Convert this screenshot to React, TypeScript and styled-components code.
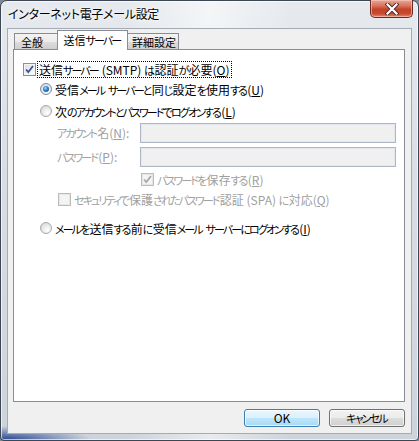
import { Fragment } from 'react';
import styled, { createGlobalStyle } from 'styled-components';

const GlobalStyle = createGlobalStyle`
    html, body {
        margin: 0;
        padding: 0;
        background: #7f8a99;
    }
    body {
        font-family: "Noto Sans CJK JP", "Noto Sans", sans-serif;
        font-size: 12px;
        font-feature-settings: "palt";
    }
`;

// Meiryo UI has narrow kana; Noto's are full width, so kana runs get squeezed
const Kana = styled.span`
    font-size: 11px;
    letter-spacing: -1.9px;
    margin-right: 1.2px;
`;

const KANA_RUN = /([\u3041-\u30ff]+)/;

const jp = (text: string) =>
    text.split(KANA_RUN).map((part, i) => (i % 2 ? <Kana key={i}>{part}</Kana> : <Fragment key={i}>{part}</Fragment>));

const Window = styled.div`
    box-sizing: border-box;
    width: 419px;
    height: 441px;
    border: 1px solid #3d4654;
    border-radius: 7px 7px 4px 4px;
    background:
        radial-gradient(ellipse 90px 14px at 0% 100%, rgba(24, 58, 140, 0.95), rgba(24, 58, 140, 0) 100%),
        linear-gradient(90deg, rgba(255, 255, 255, 0) 30%, rgba(255, 255, 255, 0.55) 50%, rgba(255, 255, 255, 0) 70%),
        linear-gradient(180deg, #e6eaee 0%, #d9dee4 40%, #cdd3da 100%);
    box-shadow: inset 0 0 0 1px rgba(255, 255, 255, 0.65);
    display: flex;
    flex-direction: column;
    padding: 0 6px 6px 6px;
`;

const TitleBar = styled.div`
    height: 27px;
    display: flex;
    align-items: flex-start;
    justify-content: space-between;
`;

const Title = styled.div`
    padding: 5px 0 0 1px;
    color: #000;
    font-size: 12px;
    line-height: 16px;
    letter-spacing: -0.3px;
    text-shadow: 0 0 6px #fff, 0 0 3px #fff;
`;

const CloseButton = styled.div`
    box-sizing: border-box;
    width: 43px;
    height: 18px;
    margin: -1px -1px 0 0;
    border: 1px solid #6a2b22;
    border-top: none;
    border-radius: 0 0 5px 5px;
    background: linear-gradient(180deg, #e9a697 0%, #d9725c 35%, #c6402a 55%, #c84a30 80%, #de8a6c 100%);
    box-shadow: inset 0 0 0 1px rgba(255, 210, 200, 0.55);
    display: flex;
    align-items: center;
    justify-content: center;
`;

const Client = styled.div`
    flex: 1;
    box-sizing: border-box;
    background: #f0f0f0;
    border: 1px solid #a3abb5;
    padding: 2px 6px 5px 5px;
    display: flex;
    flex-direction: column;
`;

const TabStrip = styled.div`
    display: flex;
    align-items: flex-end;
    padding-left: 1px;
    height: 19px;
    position: relative;
    z-index: 1;
    margin-bottom: -1px;
`;

const Tab = styled.div<{ $active?: boolean; $width: number; $pad?: number }>`
    box-sizing: border-box;
    flex: none;
    width: ${p => p.$width}px;
    height: ${p => (p.$active ? 20 : 17)}px;
    padding: 0 0 ${p => (p.$active ? 2 : 0)}px ${p => p.$pad ?? 0}px;
    margin: 0 ${p => (p.$active ? -2 : 0)}px;
    border: 1px solid #898c95;
    border-bottom: ${p => (p.$active ? 'none' : '1px solid #898c95')};
    background: ${p => (p.$active ? '#fff' : 'linear-gradient(180deg, #f3f3f3 0%, #ebebeb 50%, #dddddd 51%, #cfcfcf 100%)')};
    position: relative;
    z-index: ${p => (p.$active ? 2 : 1)};
    display: flex;
    align-items: center;
    justify-content: ${p => (p.$pad !== undefined ? 'flex-start' : 'center')};
    font-size: 11px;
    line-height: 14px;
    color: #000;
`;

const Panel = styled.div`
    box-sizing: border-box;
    height: 353px;
    background: #fff;
    border: 1px solid #898c95;
    padding: 10px 8px 0 9px;
    display: flex;
    flex-direction: column;
`;

const Row = styled.div<{ $indent: number; $gap: number; $height?: number }>`
    display: flex;
    align-items: center;
    height: ${p => p.$height ?? 18}px;
    margin-top: ${p => p.$gap}px;
    padding-left: ${p => p.$indent}px;
    line-height: 16px;
    white-space: nowrap;
`;

const Label = styled.span<{ $disabled?: boolean; $focused?: boolean }>`
    color: ${p => (p.$disabled ? '#a0a0a0' : '#000')};
    margin-left: 2px;
    padding: 0 1px;
    height: 15px;
    line-height: 15px;
    outline: ${p => (p.$focused ? '1px dotted #000' : 'none')};
    outline-offset: 0;
`;

const FieldLabel = styled.span`
    width: 83px;
    flex: none;
    color: #a0a0a0;
`;

const TextBox = styled.div`
    box-sizing: border-box;
    width: 256px;
    height: 20px;
    background: #f0f0f0;
    border: 1px solid #afb7c6;
    box-shadow: inset 0 0 0 1px #e3e9ef;
`;

const Box = styled.span<{ $disabled?: boolean }>`
    box-sizing: border-box;
    flex: none;
    width: 13px;
    height: 13px;
    border: 1px solid ${p => (p.$disabled ? '#bcbcbc' : '#8e8f8f')};
    background: ${p => (p.$disabled ? '#f4f4f4' : 'linear-gradient(135deg, #dcdcdc 0%, #ffffff 100%)')};
    box-shadow: inset 0 0 0 1px ${p => (p.$disabled ? '#e6e6e6' : '#f4f4f4')};
    display: flex;
    align-items: center;
    justify-content: center;
`;

const RadioDot = styled.span<{ $checked?: boolean }>`
    box-sizing: border-box;
    flex: none;
    width: 12px;
    height: 12px;
    border-radius: 50%;
    border: 1px solid ${p => (p.$checked ? '#7d8a9b' : '#a8a8a8')};
    background: radial-gradient(circle at 65% 70%, #ffffff 0%, #e4e4e4 60%, #cfcfcf 100%);
    display: flex;
    align-items: center;
    justify-content: center;
    &::after {
        content: '';
        display: ${p => (p.$checked ? 'block' : 'none')};
        width: 6px;
        height: 6px;
        border-radius: 50%;
        background: radial-gradient(circle at 40% 35%, #9fdcff 0%, #2b7fd0 45%, #0d3f86 100%);
    }
`;

const ButtonBar = styled.div`
    display: flex;
    justify-content: flex-end;
    gap: 9px;
    margin-top: 7px;
`;

const Button = styled.div<{ $default?: boolean }>`
    box-sizing: border-box;
    width: 76px;
    height: 18px;
    border-radius: 3px;
    border: 1px solid ${p => (p.$default ? '#3c7fb1' : '#707070')};
    background: ${p =>
        p.$default
            ? 'linear-gradient(180deg, #eaf6fd 0%, #d9f0fc 50%, #bee6fd 51%, #a7d9f5 100%)'
            : 'linear-gradient(180deg, #f2f2f2 0%, #ebebeb 50%, #dddddd 51%, #cfcfcf 100%)'};
    box-shadow: inset 0 0 0 1px rgba(255, 255, 255, 0.7);
    display: flex;
    align-items: center;
    justify-content: center;
    color: #000;
    line-height: 14px;
`;

const Check = ({ disabled }: { disabled?: boolean }) => (
    <svg width="11" height="11" viewBox="0 0 11 11">
        <path d="M2 5.5 L4.3 8 L9 2" fill="none" stroke={disabled ? '#a8a8a8' : '#3a5597'} strokeWidth="1.8" />
    </svg>
);

const CheckBox = ({ checked, disabled }: { checked?: boolean; disabled?: boolean }) => (
    <Box $disabled={disabled}>{checked && <Check disabled={disabled} />}</Box>
);

const CloseGlyph = () => (
    <svg width="14" height="12" viewBox="0 0 14 12">
        <path d="M2.5 1.5 L11.5 10.5 M11.5 1.5 L2.5 10.5" stroke="#4a2a26" strokeWidth="4" strokeLinecap="square" />
        <path d="M2.5 1.5 L11.5 10.5 M11.5 1.5 L2.5 10.5" stroke="#ffffff" strokeWidth="2.2" strokeLinecap="square" />
    </svg>
);

export default function App() {
    return (
        <>
            <GlobalStyle />
            <Window>
                <TitleBar>
                    <Title>インターネット電子メール設定</Title>
                    <CloseButton>
                        <CloseGlyph />
                    </CloseButton>
                </TitleBar>
                <Client>
                    <TabStrip>
                        <Tab $width={45} $pad={6}>全般</Tab>
                        <Tab $width={71} $active>{jp('送信サーバー')}</Tab>
                        <Tab $width={53} $pad={5}>詳細設定</Tab>
                    </TabStrip>
                    <Panel>
                        <Row $indent={0} $gap={0}>
                            <CheckBox checked />
                            <Label $focused>{jp('送信サーバー (SMTP) は認証が必要(')}<u>O</u>)</Label>
                        </Row>
                        <Row $indent={17} $gap={2}>
                            <RadioDot $checked />
                            <Label>{jp('受信メール サーバーと同じ設定を使用する(')}<u>U</u>)</Label>
                        </Row>
                        <Row $indent={17} $gap={4}>
                            <RadioDot />
                            <Label>{jp('次のアカウントとパスワードでログオンする(')}<u>L</u>)</Label>
                        </Row>
                        <Row $indent={34} $gap={3} $height={20}>
                            <FieldLabel>{jp('アカウント名(')}<u>N</u>):</FieldLabel>
                            <TextBox />
                        </Row>
                        <Row $indent={34} $gap={4} $height={20}>
                            <FieldLabel>{jp('パスワード(')}<u>P</u>):</FieldLabel>
                            <TextBox />
                        </Row>
                        <Row $indent={118} $gap={3}>
                            <CheckBox checked disabled />
                            <Label $disabled>{jp('パスワードを保存する(')}<u>R</u>)</Label>
                        </Row>
                        <Row $indent={35} $gap={2}>
                            <CheckBox disabled />
                            <Label $disabled>{jp('セキュリティで保護されたパスワード認証 (SPA) に対応(')}<u>Q</u>)</Label>
                        </Row>
                        <Row $indent={17} $gap={11}>
                            <RadioDot />
                            <Label>{jp('メールを送信する前に受信メール サーバーにログオンする(')}<u>I</u>)</Label>
                        </Row>
                    </Panel>
                    <ButtonBar>
                        <Button $default>OK</Button>
                        <Button>{jp('キャンセル')}</Button>
                    </ButtonBar>
                </Client>
            </Window>
        </>
    );
}
